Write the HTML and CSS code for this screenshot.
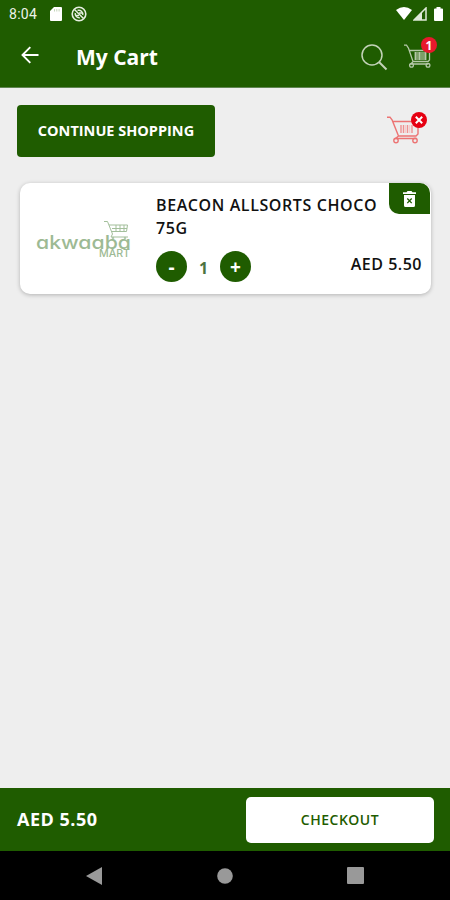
FILE: index.html
```html
<!DOCTYPE html>
<html lang="en">
<head>
  <meta charset="UTF-8" />
  <meta name="viewport" content="width=device-width, initial-scale=1.0"/>
  <title>My Cart</title>
  <link rel="stylesheet" href="styles.css">
</head>
<body>

  <!-- Status bar -->
  <div class="status-bar">
    <span class="clock">8:04</span>
    <svg class="sd-icon" width="12" height="14" viewBox="0 0 12 14"><path d="M4 0h7a1 1 0 0 1 1 1v12a1 1 0 0 1-1 1H1a1 1 0 0 1-1-1V4z" fill="#fff"/><path d="M4.5 2v2.500M6.800 2v2.500M9.100 2v2.500" stroke="#c5d5bb" stroke-width="1"/></svg>
    <svg class="sync-icon" width="16" height="16" viewBox="0 0 16 16" fill="none" stroke="#e6eee0"><circle cx="8" cy="8" r="6.8" stroke-width="1.600"/><path d="M3.500 3.500l9 9M4.300 7a4 4 0 0 0 4.500 4.700M6.500 4.400a4 4 0 0 1 5.200 4.600" stroke-width="1.500"/><path d="M8 7h3M5 9.500h3" stroke-width="1.300"/></svg>
    <div class="signals">
      <svg width="16" height="13" viewBox="0 0 16 13"><path d="M0 3Q8-3 16 3L8 13z" fill="#fff"/></svg>
      <svg width="14" height="14" viewBox="0 0 14 14"><path d="M1 13L13 1v12z" fill="none" stroke="#dfe9d8" stroke-width="1.500"/><path d="M1 13l8-8v8z" fill="#dfe9d8"/></svg>
      <svg class="battery" width="9" height="14" viewBox="0 0 9 14"><path d="M2.500 0h4v1.500H8a1 1 0 0 1 1 1V13a1 1 0 0 1-1 1H1a1 1 0 0 1-1-1V2.500a1 1 0 0 1 1-1h1.500z" fill="#fff"/></svg>
    </div>
  </div>

  <!-- Header -->
  <header>
    <svg class="back" width="18" height="18" viewBox="0 0 18 18" fill="none" stroke="#fff" stroke-width="1.900"><path d="M17.500 9H1.500M9.300 1.200L1.500 9l7.800 7.800"/></svg>
    <h1>My Cart</h1>
    <svg class="search" width="27" height="27" viewBox="0 0 27 27" fill="none" stroke="#c3d3b8"><circle cx="11" cy="11" r="10" stroke-width="1.500"/><path d="M18 18l7.500 7.500" stroke-width="2"/></svg>
    <div class="cart">
      <svg width="27" height="25" viewBox="0 0 27 25" fill="none" stroke="#b5c8a8" stroke-width="1.300"><path d="M10.500 8h12v8h-12z" fill="#7c9e68" stroke="none"/><path d="M0 1.200h2.500l2 3L9 17.500M5 6.500h20.500v9.500l-1.500 1.500H9M9 17.500l-2 2.500h17.500"/><path d="M11.500 8v8M15.500 8v8M21.500 8v8"/><circle cx="7.500" cy="21.200" r="1.900"/><circle cx="24" cy="21.200" r="1.900"/></svg>
      <span class="badge">1</span>
    </div>
  </header>

  <!-- Cart content -->
  <main>
    <div class="actions">
      <button class="continue">CONTINUE SHOPPING</button>
      <div class="clear-cart">
        <svg width="33" height="28" viewBox="0 0 33 28" fill="none" stroke="#ec7474" stroke-width="1.400"><path d="M0 1.200h3l2.200 3L11.500 20M6 5.500h25v12.500l-2 2H11.500M11.500 20l-3 2.500h21"/><path d="M14 9v8M16.500 9v8M20.500 9v8M25 9v8" stroke="#ef9292"/><path d="M18.500 9v8M22.700 9v8" stroke="#f7cccc"/><circle cx="9" cy="24.500" r="2.200"/><circle cx="28" cy="24.500" r="2.200"/></svg>
        <span class="badge"><svg width="8" height="8" viewBox="0 0 8 8"><path d="M.8.8l6.400 6.400M7.200.8L.8 7.200" stroke="#fff" stroke-width="2"/></svg></span>
      </div>
    </div>

    <section class="item">
      <svg class="logo" width="96" height="40" viewBox="0 0 96 40">
        <g fill="none" stroke="#a3bf9b" stroke-width="1"><path d="M68 1.500h3.500l5 12.500-1.500 3h17M73 5h18.500l-1 6.500H76M76 8.500h15M80 5v6.500M84 5v6.500M88 5v6.500"/><circle cx="77" cy="18" r=".8"/><circle cx="89" cy="18" r=".8"/></g>
        <text class="logo-name" x="0" y="28.5" textLength="95" lengthAdjust="spacingAndGlyphs">akwaaba</text>
        <text class="logo-sub" x="63" y="37" textLength="31" lengthAdjust="spacingAndGlyphs">MART</text>
      </svg>
      <div class="details">
        <h2>BEACON ALLSORTS CHOCO 75G</h2>
        <div class="row">
          <button class="qty-btn">-</button>
          <span class="qty">1</span>
          <button class="qty-btn">+</button>
          <span class="price">AED 5.50</span>
        </div>
      </div>
      <button class="remove">
        <svg width="13" height="16" viewBox="0 0 13 16"><path d="M0 1.200h3.500L4.500 0h4l1 1.200H13V3H0zM1 4h11v10.500a1.500 1.500 0 0 1-1.500 1.500h-8A1.500 1.500 0 0 1 1 14.500z" fill="#fff"/><path d="M4.300 7.500l4.400 4.600M8.700 7.500l-4.400 4.600" stroke="#1f5c00" stroke-width="1.300"/></svg>
      </button>
    </section>
  </main>

  <!-- Total and checkout -->
  <footer>
    <span class="total">AED 5.50</span>
    <button class="checkout">CHECKOUT</button>
  </footer>

  <!-- Android navigation -->
  <nav>
    <svg width="16" height="18" viewBox="0 0 16 18"><path d="M0 9L16 0v18z" fill="#999"/></svg>
    <svg width="16" height="16" viewBox="0 0 16 16"><circle cx="8" cy="8" r="7.800" fill="#999"/></svg>
    <svg width="17" height="17" viewBox="0 0 17 17"><rect width="17" height="17" rx="1" fill="#999"/></svg>
  </nav>

</body>
</html>
```
FILE: styles.css
```css
/* General Styling */
* {
  box-sizing: border-box;
}

body {
  display: flex;
  flex-direction: column;
  height: 900px;
  margin: 0;
  background: #eee;
  font-family: "Open Sans", "Noto Sans", sans-serif;
}

svg {
  display: block;
  flex: none;
}

button {
  padding: 0;
  border: none;
  font-family: inherit;
  cursor: pointer;
}

/* Status bar */
.status-bar {
  display: flex;
  align-items: center;
  height: 27px;
  padding: 0 7px 0 9px;
  background: #1f5c00;
}

.clock {
  width: 41px;
  color: #edf3e9;
  font: 14px Roboto, sans-serif;
  letter-spacing: 0.3px;
}

.sync-icon {
  margin-left: 9px;
}

.signals {
  display: flex;
  align-items: center;
  gap: 1px;
  margin-left: auto;
}

.battery {
  margin-left: 6px;
}

/* Header */
header {
  display: flex;
  align-items: center;
  height: 61px;
  padding: 0 19px 0 21px;
  background: #1f5c00;
  border-bottom: 1px solid #608552;
}

.back {
  margin-bottom: 5px;
}

h1 {
  flex: 1;
  margin: 0 0 0 37px;
  color: white;
  font-size: 21px;
  font-weight: 700;
}

.search {
  margin-right: 16px;
}

.cart,
.clear-cart {
  position: relative;
}

.cart {
  margin-bottom: 1px;
}

.badge {
  position: absolute;
  top: -7px;
  right: -6px;
  display: flex;
  align-items: center;
  justify-content: center;
  width: 16px;
  height: 16px;
  border-radius: 50%;
  background: #e8192c;
  color: white;
  font-size: 12px;
  font-weight: 700;
}

/* Cart content */
main {
  flex: 1;
  padding: 17px 19px 0 17px;
}

.actions {
  display: flex;
  align-items: center;
  justify-content: space-between;
  padding-right: 11px;
}

.continue {
  width: 198px;
  height: 52px;
  padding-bottom: 2px;
  border-radius: 4px;
  background: #1f5c00;
  color: white;
  font-size: 14.5px;
  font-weight: 700;
}

.clear-cart {
  margin-bottom: 2px;
}

.clear-cart .badge {
  top: -4px;
  right: -7px;
  background: #e60012;
}

.item {
  position: relative;
  display: flex;
  height: 111px;
  margin: 26px 0 0 3px;
  border-radius: 10px;
  background: white;
  box-shadow: 0 1px 4px rgba(0, 0, 0, 0.25);
}

.logo {
  margin: 37px 24px 0 16px;
}

.logo-name {
  fill: #9dba94;
  font: 500 18px Inter, sans-serif;
  font-feature-settings: "cv11";
}

.logo-sub {
  fill: #9dba94;
  font: 500 10px Inter, sans-serif;
}

.details {
  flex: 1;
  padding: 11px 9px 0 0;
}

h2 {
  width: 226px;
  margin: 0;
  color: #111;
  font-size: 16px;
  font-weight: 600;
  letter-spacing: 0.6px;
  line-height: 23px;
}

.row {
  display: flex;
  align-items: center;
  margin-top: 11px;
}

.qty-btn {
  width: 31px;
  height: 31px;
  border-radius: 50%;
  background: #1f5c00;
  color: white;
  font-size: 19px;
  font-weight: 700;
  line-height: 33px;
}

.qty {
  width: 33px;
  padding-top: 3px;
  color: #4d7340;
  font-size: 16px;
  font-weight: 700;
  text-align: center;
}

.price {
  margin: 0 0 5px auto;
  color: #111;
  font-size: 16px;
  font-weight: 600;
  letter-spacing: 0.5px;
}

.remove {
  position: absolute;
  top: 0;
  right: 1px;
  display: flex;
  align-items: center;
  justify-content: center;
  width: 41px;
  height: 31px;
  border-radius: 0 10px 0 10px;
  background: #1f5c00;
}

/* Total and checkout */
footer {
  display: flex;
  align-items: center;
  justify-content: space-between;
  height: 63px;
  padding: 0 16px 0 17px;
  background: #1f5c00;
}

.total {
  padding-bottom: 2px;
  color: white;
  font-size: 18px;
  font-weight: 700;
  letter-spacing: 0.5px;
}

.checkout {
  width: 188px;
  height: 46px;
  border-radius: 5px;
  background: white;
  color: #1f5c00;
  font-size: 14px;
  font-weight: 600;
  letter-spacing: 0.5px;
}

/* Android navigation */
nav {
  display: flex;
  align-items: center;
  justify-content: space-between;
  height: 49px;
  padding: 0 86px;
  background: black;
}
```
